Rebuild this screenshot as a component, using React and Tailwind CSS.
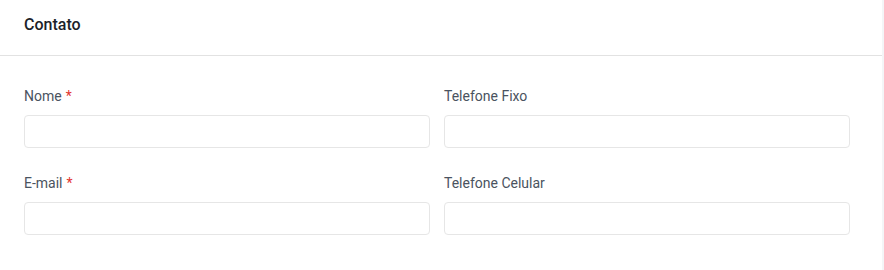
export default function App() {
  const Field = ({ label, required }) => (
    <div className="flex flex-col">
      <label className="text-[14px] leading-5 text-[#4a5360] mb-[9px] h-5">
        {label}
        {required && <span className="text-[#e3342f] ml-1">*</span>}
      </label>
      <input
        type="text"
        className="h-[33px] w-full rounded-[4px] border border-[#e6e6e6] bg-white outline-none"
      />
    </div>
  );
  return (
    <div className="flex w-[884px] h-[270px] bg-[#f4f5f7]" style={{ fontFamily: "Roboto, 'Liberation Sans', sans-serif" }}>
      <div className="w-[882px] h-full bg-white">
        <div className="h-[56px] border-b border-[#e2e2e2] pl-6 pt-[13px]">
          <h2 className="text-[16px] leading-6 font-medium text-[#1c1f2a]">Contato</h2>
        </div>
        <div className="pl-6 pr-8 pt-[30px] grid grid-cols-2 gap-x-[14px] gap-y-[25px]">
          <Field label="Nome" required />
          <Field label="Telefone Fixo" />
          <Field label="E-mail" required />
          <Field label="Telefone Celular" />
        </div>
      </div>
    </div>
  );
}
